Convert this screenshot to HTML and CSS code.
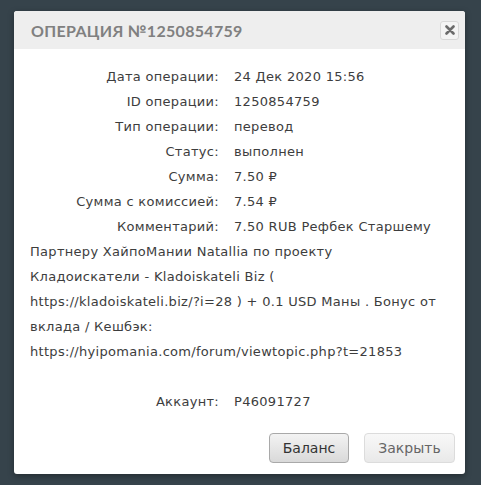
FILE: index.html
```html
<!DOCTYPE html>
<html lang="ru">
<head>
<meta charset="utf-8">
<title>Операция</title>
<link rel="stylesheet" href="styles.css">
</head>
<body>
<div class="dialog">
  <div class="dialog-header">
    <h1 class="dialog-title">ОПЕРАЦИЯ №1250854759</h1>
    <button class="close-btn" aria-label="Закрыть">
      <svg width="10" height="10" viewBox="0 0 10 10"><path d="M1.5 1.5 L8.5 8.5 M8.5 1.5 L1.5 8.5" stroke="#6b6b6b" stroke-width="2.6" stroke-linecap="round"/></svg>
    </button>
  </div>
  <div class="dialog-body">
    <div class="row"><span class="label">Дата операции:</span><span class="value">24 Дек 2020 15:56</span></div>
    <div class="row"><span class="label">ID операции:</span><span class="value">1250854759</span></div>
    <div class="row"><span class="label">Тип операции:</span><span class="value">перевод</span></div>
    <div class="row"><span class="label">Статус:</span><span class="value">выполнен</span></div>
    <div class="row"><span class="label">Сумма:</span><span class="value">7.50 ₽</span></div>
    <div class="row"><span class="label">Сумма с комиссией:</span><span class="value">7.54 ₽</span></div>
    <div class="row"><span class="label">Комментарий:</span><span class="value">7.50 RUB Рефбек Старшему</span></div>
    <div class="comment-rest">Партнеру ХайпоМании Natallia по проекту<br>Кладоискатели - Kladoiskateli Biz (<br>https://kladoiskateli.biz/?i=28 ) + 0.1 USD Маны . Бонус от<br>вклада / Кешбэк:<br>https://hyipomania.com/forum/viewtopic.php?t=21853</div>
    <div class="row row-account"><span class="label">Аккаунт:</span><span class="value">P46091727</span></div>
  </div>
  <div class="dialog-footer">
    <button class="btn btn-primary">Баланс</button>
    <button class="btn btn-light">Закрыть</button>
  </div>
</div>
</body>
</html>
```
FILE: styles.css
```css
html, body {
  margin: 0;
  padding: 0;
}
body {
  background: #36434b;
  width: 481px;
  height: 485px;
  overflow: hidden;
  padding: 11px 0 0 14px;
  box-sizing: border-box;
}
.dialog {
  width: 451px;
  height: 463px;
  background: #ffffff;
  border-radius: 3px;
  box-shadow: 0 2px 6px rgba(0,0,0,0.35);
  display: flex;
  flex-direction: column;
  overflow: hidden;
}
.dialog-header {
  height: 38px;
  background: #eeeeee;
  display: flex;
  align-items: center;
  justify-content: space-between;
  padding: 0 6px 0 17px;
}
.dialog-title {
  margin: 0;
  font-family: Lato, "DejaVu Sans", sans-serif;
  font-weight: 700;
  font-size: 16px;
  letter-spacing: 0.3px;
  color: #808080;
}
.close-btn {
  width: 19px;
  height: 19px;
  padding: 0;
  border: 1px solid #d8d8d8;
  border-radius: 3px;
  background: #f4f4f4;
  display: flex;
  align-items: center;
  justify-content: center;
}
.dialog-body {
  flex: 1;
  padding: 15px 16px 0 16px;
  font-family: "DejaVu Sans", sans-serif;
  font-size: 13px;
  letter-spacing: 0.3px;
  line-height: 25px;
  color: #3d3d3d;
}
.row .label {
  display: inline-block;
  width: 189px;
  text-align: right;
  margin-right: 15px;
}
.comment-rest {
  white-space: nowrap;
}
.row-account {
  margin-top: 25px;
}
.dialog-footer {
  display: flex;
  justify-content: flex-end;
  gap: 15px;
  padding: 0 10px 11px 0;
}
.btn {
  height: 30px;
  border-radius: 4px;
  font-family: "DejaVu Sans", sans-serif;
  font-size: 14px;
  padding: 0;
}
.btn-primary {
  width: 80px;
  border: 1px solid #a9a9a9;
  background: linear-gradient(#f3f3f3, #d9d9d9);
  color: #333;
}
.btn-light {
  width: 91px;
  border: 1px solid #dcdcdc;
  background: linear-gradient(#f8f8f8, #e9e9e9);
  color: #666;
}
```
